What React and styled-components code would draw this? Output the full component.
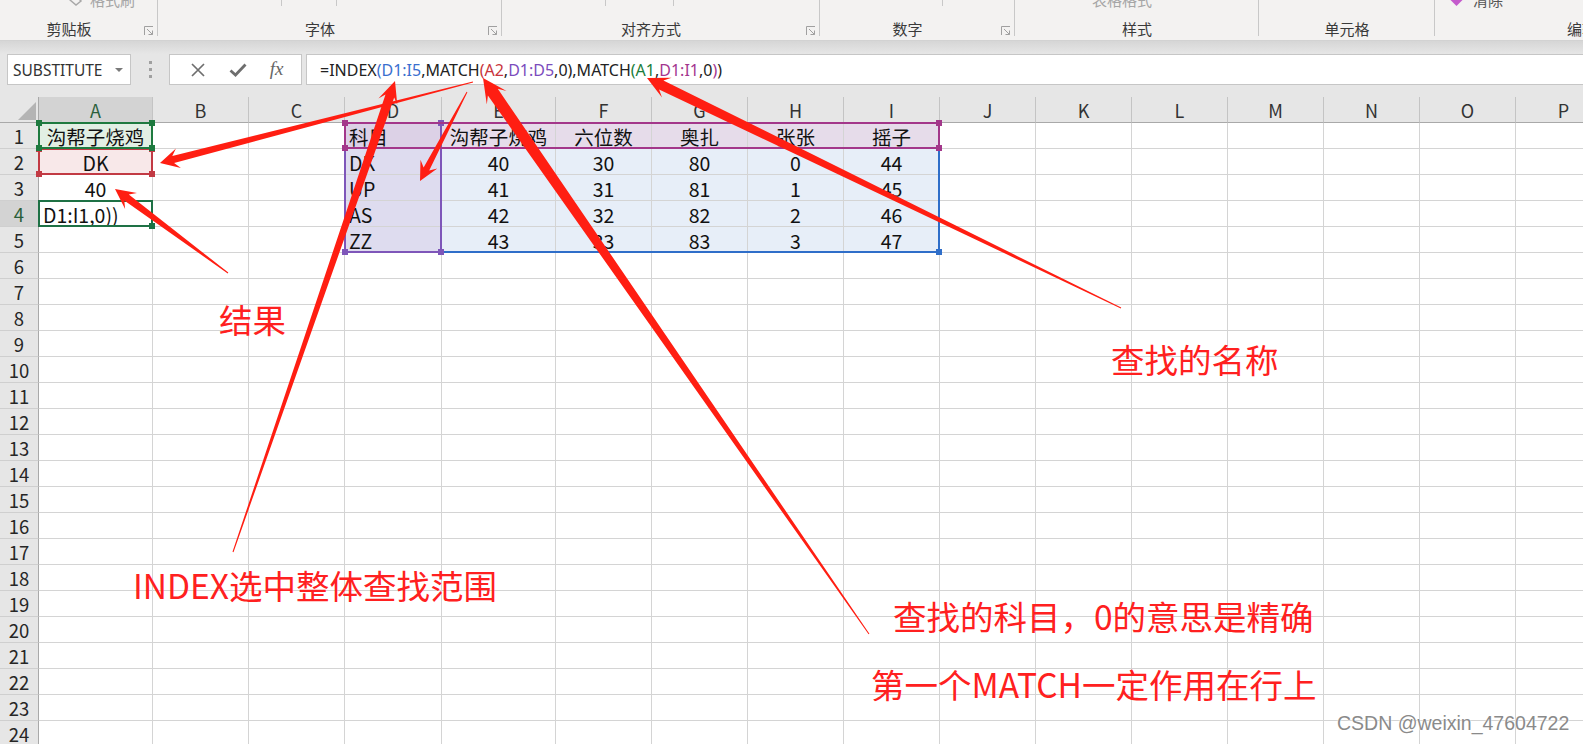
import React from 'react';
import styled, { createGlobalStyle } from 'styled-components';

const GlobalStyle = createGlobalStyle`
  html, body { margin: 0; padding: 0; background: #ffffff; }
  body { font-family: "Noto Sans CJK SC", "Noto Sans", sans-serif; }
  #root { width: 1583px; height: 744px; }
`;

const CJK = '"Noto Sans CJK SC", "Noto Sans", sans-serif';
const UI = '"Noto Sans", "Noto Sans CJK SC", sans-serif';

const Page = styled.div`
  position: relative;
  width: 1583px;
  height: 744px;
  overflow: hidden;
  background: #e6e6e6;
  display: flex;
  flex-direction: column;
`;

/* ---------- Ribbon ---------- */
const Ribbon = styled.div`
  flex: none;
  height: 41px;
  background: #f3f2f1;
  display: flex;
  overflow: hidden;
  border-bottom: 1px solid #d2d2d2;
  box-sizing: border-box;
`;

const Group = styled.div`
  position: relative;
  flex: none;
  width: ${p => p.$w}px;
  height: 38px;
  display: flex;
  flex-direction: column;
  justify-content: space-between;
  &::after {
    content: '';
    display: ${p => (p.$last ? 'none' : 'block')};
    position: absolute;
    right: 0;
    top: 0;
    width: 1px;
    height: 36px;
    background: #c8c8c8;
  }
`;

const GroupTop = styled.div`
  height: 8px;
  display: flex;
  align-items: flex-end;
  overflow: hidden;
`;

const TopText = styled.span`
  flex: none;
  margin-left: ${p => p.$ml || 0}px;
  font-family: ${CJK};
  font-size: 15px;
  line-height: 16px;
  color: ${p => p.$c || '#a6a6a6'};
  white-space: nowrap;
`;

const TopTick = styled.span`
  flex: none;
  margin-left: ${p => p.$ml}px;
  width: 1px;
  height: 6px;
  align-self: flex-start;
  background: #c8c8c8;
`;

const TopIcon = styled.svg`
  flex: none;
  margin-left: ${p => p.$ml}px;
  align-self: flex-start;
  margin-top: -6px;
`;

const GroupFoot = styled.div`
  height: 18px;
  display: flex;
  align-items: center;
`;

const GroupLabel = styled.div`
  flex: 1;
  text-align: center;
  font-family: ${CJK};
  font-size: 15px;
  line-height: 18px;
  color: #3a3a3a;
  white-space: nowrap;
`;

const LauncherSvg = styled.svg`
  flex: none;
  width: 10px;
  height: 10px;
  margin: 4px 4px 0 6px;
`;

const Launcher = () => (
  <LauncherSvg viewBox="0 0 10 10">
    <path d="M0.5 9V0.5H9" fill="none" stroke="#a0a0a0" strokeWidth="1" />
    <path d="M3 3L8.5 8.5M8.5 4.5V8.5H4.5" fill="none" stroke="#a0a0a0" strokeWidth="1" />
  </LauncherSvg>
);

/* ---------- Formula bar ---------- */
const FormulaArea = styled.div`
  flex: none;
  height: 44px;
  padding-top: 13px;
  box-sizing: border-box;
  background: linear-gradient(#d6d6d6, #e6e6e6 13px);
  display: flex;
`;

const NameBox = styled.div`
  flex: none;
  margin-left: 7px;
  width: 124px;
  height: 31px;
  box-sizing: border-box;
  border: 1px solid #c6c6c6;
  background: #ffffff;
  display: flex;
  align-items: center;
  padding-left: 5px;
  font-family: ${UI};
  font-size: 15.5px;
  color: #333333;
`;

const NameText = styled.span`
  flex: 1;
`;

const DropArrow = styled.span`
  flex: none;
  width: 0;
  height: 0;
  margin-right: 7px;
  border-left: 4px solid transparent;
  border-right: 4px solid transparent;
  border-top: 4px solid #7a7a7a;
`;

const Grip = styled.div`
  flex: none;
  width: 38px;
  display: flex;
  flex-direction: column;
  align-items: center;
  justify-content: center;
  gap: 4px;
`;

const GripDot = styled.span`
  width: 3px;
  height: 3px;
  background: #a0a0a0;
`;

const FxBox = styled.div`
  flex: none;
  width: 133px;
  height: 31px;
  box-sizing: border-box;
  border: 1px solid #c6c6c6;
  background: #ffffff;
  display: flex;
  align-items: center;
  justify-content: space-around;
  padding: 0 6px 0 8px;
`;

const FxText = styled.span`
  font-family: "Liberation Serif", serif;
  font-style: italic;
  font-size: 19px;
  color: #666666;
  line-height: 1;
  margin-top: -2px;
`;

const FormulaInput = styled.div`
  flex: 1;
  margin-left: 4px;
  height: 31px;
  box-sizing: border-box;
  border: 1px solid #c6c6c6;
  border-right: none;
  background: #ffffff;
  display: flex;
  align-items: center;
  padding-left: 13px;
  font-family: ${UI};
  font-size: 16px;
  color: #222222;
  white-space: nowrap;
`;

const Ref = styled.span`
  color: ${p => p.$c};
`;

const Spacer = styled.div`
  flex: none;
  height: 12px;
`;

/* ---------- Sheet ---------- */
const COLS = [39, 114, 96, 96, 97, 114, 96, 96, 96, 96, 96, 96, 96, 96, 96, 96, 96];
const LABELS = ['', 'A', 'B', 'C', 'D', 'E', 'F', 'G', 'H', 'I', 'J', 'K', 'L', 'M', 'N', 'O', 'P'];
const OFFS = COLS.reduce((a, w) => [...a, a[a.length - 1] + w], [0]);
const SHEET_TOP = 97;
const ROW_H = 26;
const rowTop = r => SHEET_TOP + ROW_H * r;

const Grid = styled.div`
  flex: none;
  display: grid;
  grid-template-columns: ${COLS.map(w => w + 'px').join(' ')};
  grid-auto-rows: ${ROW_H}px;
  width: max-content;
  background: #ffffff;
`;

const Corner = styled.div`
  background: #e6e6e6;
  border-right: 1px solid #a9a9a9;
  border-bottom: 1px solid #a9a9a9;
  display: flex;
  align-items: flex-end;
  justify-content: flex-end;
  padding: 0 2px 2px 0;
`;

const CornerTri = styled.span`
  width: 0;
  height: 0;
  border-left: 18px solid transparent;
  border-bottom: 18px solid #b4b4b4;
`;

const ColHead = styled.div`
  background: ${p => (p.$sel ? '#d3d3d3' : '#e6e6e6')};
  border-right: 1px solid #c4c4c4;
  border-bottom: 1px solid #a9a9a9;
  display: flex;
  align-items: center;
  justify-content: center;
  padding-top: 1px;
  font-family: ${CJK};
  font-size: 18px;
  line-height: 1;
  color: ${p => (p.$sel ? '#2a5f3b' : '#333333')};
`;

const RowHead = styled.div`
  background: ${p => (p.$sel ? '#d3d3d3' : '#e6e6e6')};
  border-right: 1px solid #a9a9a9;
  border-bottom: 1px solid #cfcfcf;
  display: flex;
  align-items: center;
  justify-content: center;
  padding-top: 2px;
  font-family: ${CJK};
  font-size: 18.5px;
  line-height: 1;
  color: ${p => (p.$sel ? '#2a5f3b' : '#262626')};
`;

const Cell = styled.div`
  background: ${p => p.$bg || '#ffffff'};
  border-right: 1px solid #d4d4d4;
  border-bottom: 1px solid #d4d4d4;
  display: flex;
  align-items: center;
  justify-content: ${p => (p.$left ? 'flex-start' : 'center')};
  padding: 2px 0 0 ${p => (p.$left ? 4 : 0)}px;
  font-family: ${CJK};
  font-size: 19.5px;
  line-height: 1;
  color: #111111;
  white-space: nowrap;
  overflow: hidden;
`;

/* ---------- overlays ---------- */
const RangeBox = styled.div`
  position: absolute;
  box-sizing: border-box;
  border: 2px solid ${p => p.$c};
  pointer-events: none;
`;

const Handle = styled.span`
  position: absolute;
  width: 6px;
  height: 6px;
  background: ${p => p.$c};
  ${p => (p.$v === 't' ? 'top: -4px;' : 'bottom: -4px;')}
  ${p => (p.$h === 'l' ? 'left: -4px;' : 'right: -4px;')}
`;

const Overlay = styled.svg`
  position: absolute;
  left: 0;
  top: 0;
  pointer-events: none;
`;

const Note = styled.div`
  position: absolute;
  left: ${p => p.$x}px;
  top: ${p => p.$y}px;
  font-family: ${CJK};
  font-size: 33.5px;
  line-height: 1;
  color: #ff2020;
  white-space: nowrap;
`;

const Watermark = styled.div`
  position: absolute;
  left: 1337px;
  top: 714px;
  font-family: "Liberation Sans", Arial, sans-serif;
  font-size: 19.5px;
  line-height: 1;
  color: #8a8a8a;
  text-shadow: 0 0 2px #ffffff, 0 0 1px #ffffff;
  white-space: nowrap;
`;

/* ---------- data ---------- */
const DATA = {
  1: { 1: ['沟帮子烧鸡'], 4: ['科目', true], 5: ['沟帮子烧鸡'], 6: ['六位数'], 7: ['奥扎'], 8: ['张张'], 9: ['摇子'] },
  2: { 1: ['DK'], 4: ['DK', true], 5: ['40'], 6: ['30'], 7: ['80'], 8: ['0'], 9: ['44'] },
  3: { 1: ['40'], 4: ['UP', true], 5: ['41'], 6: ['31'], 7: ['81'], 8: ['1'], 9: ['45'] },
  4: { 1: ['D1:I1,0))', true], 4: ['AS', true], 5: ['42'], 6: ['32'], 7: ['82'], 8: ['2'], 9: ['46'] },
  5: { 4: ['ZZ', true], 5: ['43'], 6: ['33'], 7: ['83'], 8: ['3'], 9: ['47'] },
};

function cellBg(r, c) {
  if (r === 1 && c === 1) return '#e2efe4';
  if (r === 2 && c === 1) return '#f8e8e9';
  if (c === 4 && r === 1) return '#dcd1e6';
  if (c === 4 && r >= 2 && r <= 5) return '#dedcef';
  if (r === 1 && c >= 5 && c <= 9) return '#e6dcea';
  if (r >= 2 && r <= 5 && c >= 5 && c <= 9) return '#e7eef8';
  return null;
}

const RANGES = [
  { c: '#2f6ec9', c0: 4, c1: 9, r0: 1, r1: 5 },
  { c: '#7e56b9', c0: 4, c1: 4, r0: 1, r1: 5 },
  { c: '#a3378a', c0: 4, c1: 9, r0: 1, r1: 1 },
  { c: '#c23a44', c0: 1, c1: 1, r0: 2, r1: 2 },
  { c: '#1e7a3f', c0: 1, c1: 1, r0: 1, r1: 1 },
];

function boxStyle(c0, c1, r0, r1) {
  const x0 = OFFS[c0];
  const x1 = OFFS[c1 + 1];
  const y0 = rowTop(r0);
  const y1 = rowTop(r1 + 1);
  return { left: x0 - 1, top: y0 - 1, width: x1 - x0 + 1, height: y1 - y0 + 1 };
}

function arrowPoints(tx, ty, hx, hy, { H = 20, HW = 10, SW = 4, TW = 0.5 } = {}) {
  const dx = hx - tx;
  const dy = hy - ty;
  const len = Math.hypot(dx, dy);
  const ux = dx / len;
  const uy = dy / len;
  const nx = -uy;
  const ny = ux;
  const bx = hx - ux * H;
  const by = hy - uy * H;
  const kx = hx - ux * H * 0.72;
  const ky = hy - uy * H * 0.72;
  const pts = [
    [tx + nx * TW, ty + ny * TW],
    [kx + nx * SW, ky + ny * SW],
    [bx + nx * HW, by + ny * HW],
    [hx, hy],
    [bx - nx * HW, by - ny * HW],
    [kx - nx * SW, ky - ny * SW],
    [tx - nx * TW, ty - ny * TW],
  ];
  return pts.map(p => p[0].toFixed(1) + ',' + p[1].toFixed(1)).join(' ');
}

const ARROWS = [
  { t: [473, 82], h: [160, 163], o: { H: 19, HW: 10, SW: 3.6 } },
  { t: [467, 92], h: [420, 181], o: { H: 19, HW: 9.5, SW: 3.2 } },
  { t: [233, 552], h: [395, 81], o: { H: 22, HW: 10, SW: 4.6 } },
  { t: [228, 273], h: [115, 189], o: { H: 20, HW: 10, SW: 3.8 } },
  { t: [869, 634], h: [483, 78], o: { H: 24, HW: 12, SW: 6 } },
  { t: [1121, 308], h: [647, 78], o: { H: 22, HW: 11, SW: 5 } },
];

const GROUPS = [
  { w: 158, label: '剪贴板', launcher: true, kind: 'clip' },
  { w: 344, label: '字体', launcher: true, ticks: [123, 54] },
  { w: 318, label: '对齐方式', launcher: true, ticks: [103, 67] },
  { w: 195, label: '数字', launcher: true, ticks: [122] },
  { w: 244, label: '样式', kind: 'style' },
  { w: 176, label: '单元格' },
  { w: 294, label: '编辑', last: true, kind: 'edit' },
];

function GroupTopContent({ g }) {
  if (g.kind === 'clip') {
    return (
      <>
        <TopIcon $ml={68} width="15" height="12" viewBox="0 0 15 12">
          <path d="M2 2L8 2L13 7L8 11L2 6Z" fill="none" stroke="#a8a8a8" strokeWidth="1.5" />
        </TopIcon>
        <TopText $ml={7}>格式刷</TopText>
      </>
    );
  }
  if (g.kind === 'style') return <TopText $ml={77}>表格格式</TopText>;
  if (g.kind === 'edit') {
    return (
      <>
        <TopIcon $ml={15} width="13" height="12" viewBox="0 0 13 12">
          <path d="M6.5 0L12.5 6L6.5 12L0.5 6Z" fill="#c45bcc" />
        </TopIcon>
        <TopText $ml={10} $c="#555555">清除</TopText>
      </>
    );
  }
  if (g.ticks) return g.ticks.map((m, i) => <TopTick key={i} $ml={m} />);
  return null;
}

export default function App() {
  const rows = [];
  for (let r = 0; r <= 24; r++) {
    for (let c = 0; c < COLS.length; c++) {
      const key = r + '-' + c;
      if (r === 0 && c === 0) {
        rows.push(
          <Corner key={key}>
            <CornerTri />
          </Corner>
        );
      } else if (r === 0) {
        rows.push(
          <ColHead key={key} $sel={c === 1}>
            {LABELS[c]}
          </ColHead>
        );
      } else if (c === 0) {
        rows.push(
          <RowHead key={key} $sel={r === 4}>
            {r}
          </RowHead>
        );
      } else {
        const d = DATA[r] && DATA[r][c];
        rows.push(
          <Cell key={key} $bg={cellBg(r, c)} $left={d && d[1]}>
            {d ? d[0] : ''}
          </Cell>
        );
      }
    }
  }

  return (
    <>
      <GlobalStyle />
      <Page>
        <Ribbon>
          {GROUPS.map((g, i) => (
            <Group key={i} $w={g.w} $last={g.last}>
              <GroupTop>
                <GroupTopContent g={g} />
              </GroupTop>
              <GroupFoot>
                <GroupLabel>{g.label}</GroupLabel>
                {g.launcher && <Launcher />}
              </GroupFoot>
            </Group>
          ))}
        </Ribbon>

        <FormulaArea>
          <NameBox>
            <NameText>SUBSTITUTE</NameText>
            <DropArrow />
          </NameBox>
          <Grip>
            <GripDot />
            <GripDot />
            <GripDot />
          </Grip>
          <FxBox>
            <svg width="16" height="16" viewBox="0 0 16 16">
              <path d="M2 2L14 14M14 2L2 14" stroke="#6e6e6e" strokeWidth="1.7" fill="none" />
            </svg>
            <svg width="18" height="16" viewBox="0 0 18 16">
              <path d="M1.5 8.5L6.5 13L16.5 2.5" stroke="#6e6e6e" strokeWidth="2.8" fill="none" />
            </svg>
            <FxText>fx</FxText>
          </FxBox>
          <FormulaInput>
            =INDEX<Ref $c="#3a6fcf">(D1:I5</Ref>,MATCH<Ref $c="#c8343c">(A2</Ref>,
            <Ref $c="#7b4cbd">D1:D5</Ref>,0),MATCH<Ref $c="#1b7d3c">(A1</Ref>,
            <Ref $c="#a3368f">D1:I1</Ref>,0<Ref $c="#a3368f">)</Ref>)
          </FormulaInput>
        </FormulaArea>

        <Spacer />

        <Grid>{rows}</Grid>

        {RANGES.map((g, i) => (
          <RangeBox key={i} $c={g.c} style={boxStyle(g.c0, g.c1, g.r0, g.r1)}>
            <Handle $c={g.c} $v="t" $h="l" />
            <Handle $c={g.c} $v="t" $h="r" />
            <Handle $c={g.c} $v="b" $h="l" />
            <Handle $c={g.c} $v="b" $h="r" />
          </RangeBox>
        ))}
        <RangeBox $c="#1e7145" style={boxStyle(1, 1, 4, 4)}>
          <Handle $c="#1e7145" $v="b" $h="r" />
        </RangeBox>

        <Overlay width="1583" height="744" viewBox="0 0 1583 744">
          {ARROWS.map((a, i) => (
            <polygon key={i} points={arrowPoints(a.t[0], a.t[1], a.h[0], a.h[1], a.o)} fill="#ff1e12" />
          ))}
        </Overlay>

        <Note $x={219} $y={302}>结果</Note>
        <Note $x={1111} $y={342}>查找的名称</Note>
        <Note $x={133} $y={568}>INDEX选中整体查找范围</Note>
        <Note $x={893} $y={599}>查找的科目，0的意思是精确</Note>
        <Note $x={871} $y={667}>第一个MATCH一定作用在行上</Note>

        <Watermark>CSDN @weixin_47604722</Watermark>
      </Page>
    </>
  );
}
